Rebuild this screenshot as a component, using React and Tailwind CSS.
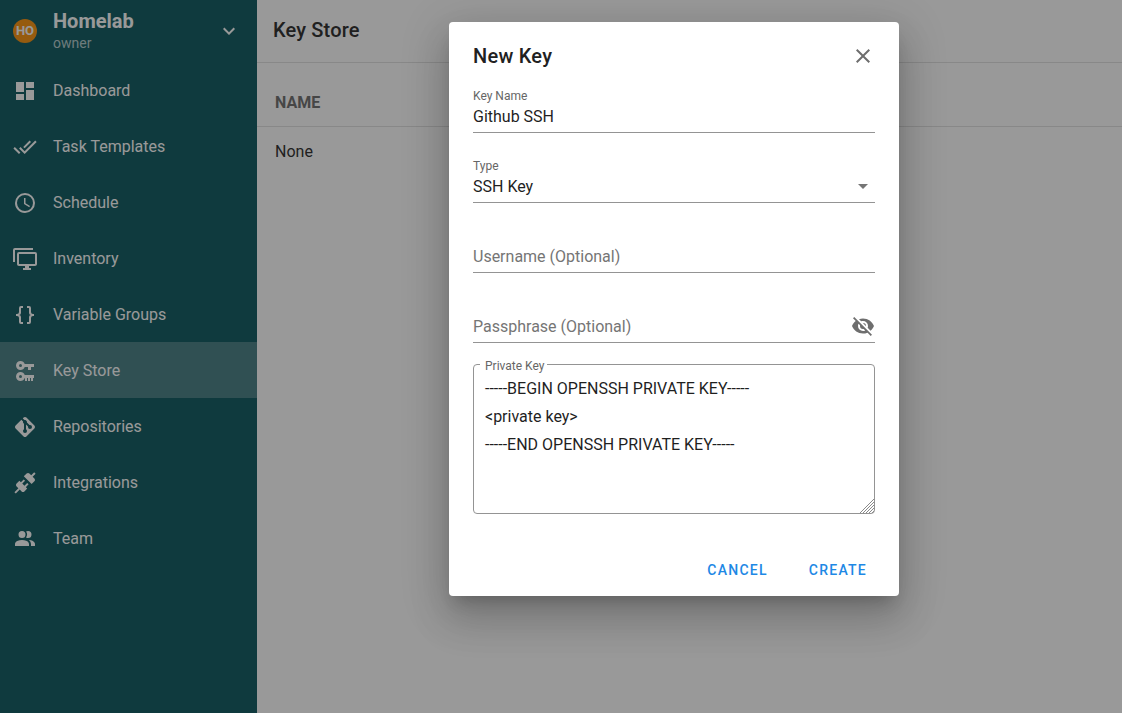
import React from "react";

const icons = {
  dashboard: "M13,3V9H21V3M13,21H21V11H13M3,21H11V15H3M3,13H11V3H3V13Z",
  checkAll: "M0.41,13.41L6,19L7.41,17.58L1.83,12M22.24,5.58L11.66,16.17L7.5,12L6.07,13.41L11.66,19L23.66,7M18,7L16.59,5.58L10.24,11.93L11.66,13.34L18,7Z",
  clock: "M12,20A8,8 0 0,0 20,12A8,8 0 0,0 12,4A8,8 0 0,0 4,12A8,8 0 0,0 12,20M12,2A10,10 0 0,1 22,12A10,10 0 0,1 12,22C6.47,22 2,17.5 2,12A10,10 0 0,1 12,2M12.5,7V12.25L17,14.92L16.25,16.15L11,13V7H12.5Z",
  monitor: "M22,17V7H6V17H22M22,5A2,2 0 0,1 24,7V17C24,18.11 23.1,19 22,19H16V21H18V23H10V21H12V19H6C4.89,19 4,18.1 4,17V7A2,2 0 0,1 6,5H22M2,3V15H0V3A2,2 0 0,1 2,1H20V3H2Z",
  braces: "M8,3A2,2 0 0,0 6,5V9A2,2 0 0,1 4,11H3V13H4A2,2 0 0,1 6,15V19A2,2 0 0,0 8,21H10V19H8V14A2,2 0 0,0 6,12A2,2 0 0,0 8,10V5H10V3M16,3A2,2 0 0,1 18,5V9A2,2 0 0,0 20,11H21V13H20A2,2 0 0,0 18,15V19A2,2 0 0,1 16,21H14V19H16V14A2,2 0 0,1 18,12A2,2 0 0,1 16,10V5H14V3H16Z",
  keys: "M7.5,2C9.46,2 11.13,3.25 11.74,5H21V8H18V11H15V8H11.74C11.13,9.75 9.46,11 7.5,11C5,11 3,9 3,6.5C3,4 5,2 7.5,2M7.5,5A1.5,1.5 0 0,0 6,6.5A1.5,1.5 0 0,0 7.5,8A1.5,1.5 0 0,0 9,6.5A1.5,1.5 0 0,0 7.5,5M7.5,13C9.46,13 11.13,14.25 11.74,16H21V19H20V22H18V19H17V22H15V19H14V22H12V19H11.74C11.13,20.75 9.46,22 7.5,22C5,22 3,20 3,17.5C3,15 5,13 7.5,13M7.5,16A1.5,1.5 0 0,0 6,17.5A1.5,1.5 0 0,0 7.5,19A1.5,1.5 0 0,0 9,17.5A1.5,1.5 0 0,0 7.5,16Z",
  git: "M2.6,10.59L8.38,4.8L10.07,6.5C9.83,7.35 10.22,8.28 11,8.73V14.27C10.4,14.61 10,15.26 10,16A2,2 0 0,0 12,18A2,2 0 0,0 14,16C14,15.26 13.6,14.61 13,14.27V9.41L15.07,11.5C15,11.65 15,11.82 15,12A2,2 0 0,0 17,14A2,2 0 0,0 19,12A2,2 0 0,0 17,10C16.82,10 16.65,10 16.5,10.07L13.93,7.5C14.19,6.57 13.71,5.55 12.78,5.16C12.35,5 11.9,4.96 11.5,5.07L9.8,3.38L10.59,2.6C11.37,1.81 12.63,1.81 13.41,2.6L21.4,10.59C22.19,11.37 22.19,12.63 21.4,13.41L13.41,21.4C12.63,22.19 11.37,22.19 10.59,21.4L2.6,13.41C1.81,12.63 1.81,11.37 2.6,10.59Z",
  connection: "M21.4 7.5C22.2 8.3 22.2 9.6 21.4 10.3L18.6 13.1L10.8 5.3L13.6 2.5C14.4 1.7 15.7 1.7 16.4 2.5L18.2 4.3L21.2 1.3L22.6 2.7L19.6 5.7L21.4 7.5M15.6 13.3L14.2 11.9L11.4 14.7L9.3 12.6L12.1 9.8L10.7 8.4L7.9 11.2L6.4 9.8L3.6 12.6C2.8 13.4 2.8 14.7 3.6 15.4L5.4 17.2L1.4 21.2L2.8 22.6L6.8 18.6L8.6 20.4C9.4 21.2 10.7 21.2 11.4 20.4L14.2 17.6L12.8 16.2L15.6 13.3Z",
  team: "M16 17V19H2V17S2 13 9 13 16 17 16 17M12.5 7.5A3.5 3.5 0 1 0 9 11A3.5 3.5 0 0 0 12.5 7.5M15.94 13A5.32 5.32 0 0 1 18 17V19H22V17S22 13.37 15.94 13M15 4A3.39 3.39 0 0 0 13.07 4.59A5 5 0 0 1 13.07 10.41A3.39 3.39 0 0 0 15 11A3.5 3.5 0 0 0 15 4Z",
  eyeOff: "M11.83,9L15,12.16C15,12.11 15,12.05 15,12A3,3 0 0,0 12,9C11.94,9 11.89,9 11.83,9M7.53,9.8L9.08,11.35C9.03,11.56 9,11.77 9,12A3,3 0 0,0 12,15C12.22,15 12.44,14.97 12.65,14.92L14.2,16.47C13.53,16.8 12.79,17 12,17A5,5 0 0,1 7,12C7,11.21 7.2,10.47 7.53,9.8M2,4.27L4.28,6.55L4.73,7C3.08,8.3 1.78,10 1,12C2.73,16.39 7,19.5 12,19.5C13.55,19.5 15.03,19.2 16.38,18.66L16.81,19.08L19.73,22L21,20.73L3.27,3M12,7A5,5 0 0,1 17,12C17,12.64 16.87,13.26 16.64,13.82L19.57,16.75C21.07,15.5 22.27,13.86 23,12C21.27,7.61 17,4.5 12,4.5C10.6,4.5 9.26,4.75 8,5.2L10.17,7.35C10.74,7.13 11.35,7 12,7Z",
  close: "M19,6.41L17.59,5L12,10.59L6.41,5L5,6.41L10.59,12L5,17.59L6.41,19L12,13.41L17.59,19L19,17.59L13.41,12L19,6.41Z",
  chevronDown: "M7.41,8.58L12,13.17L16.59,8.58L18,10L12,16L6,10L7.41,8.58Z",
  menuDown: "M7,10L12,15L17,10H7Z",
};

const Icon = ({ d, className }) => (
  <svg viewBox="0 0 24 24" fill="currentColor" className={className}>
    <path d={d} />
  </svg>
);

const menu = [
  { label: "Dashboard", icon: icons.dashboard },
  { label: "Task Templates", icon: icons.checkAll },
  { label: "Schedule", icon: icons.clock },
  { label: "Inventory", icon: icons.monitor },
  { label: "Variable Groups", icon: icons.braces },
  { label: "Key Store", icon: icons.keys, active: true },
  { label: "Repositories", icon: icons.git },
  { label: "Integrations", icon: icons.connection },
  { label: "Team", icon: icons.team },
];

const Field = ({ label, value, placeholder, icon, trailing, first }) => (
  <div className={"flex flex-col justify-end " + (first ? "h-[43px]" : "h-[70px]")}>
    <div className="h-9 flex items-end border-b border-[#949494] relative">
      {label && <span className="absolute left-0 top-[-8px] text-xs leading-[14px] text-[#666666]">{label}</span>}
      <span className={"flex-1 text-base leading-6 pb-[3px] " + (value ? "text-[#1f1f1f]" : "text-[#757575]")}>{value || placeholder}</span>
      {icon && <Icon d={icon} className={"w-6 h-6 mb-1 " + trailing} />}
    </div>
  </div>
);

export default function App() {
  return (
    <div className="h-[713px] flex bg-white overflow-hidden relative font-['Roboto',sans-serif]">
      <aside className="w-[257px] shrink-0 bg-[#005057] text-white">
        <div className="h-[62px] flex items-center pl-[13px] pr-4">
          <div className="w-6 h-6 rounded-full bg-[#f98c00] flex items-center justify-center text-[13px] font-bold mr-4">HO</div>
          <div className="flex-1 mt-[-1px]">
            <div className="text-xl leading-6 font-bold">Homelab</div>
            <div className="text-sm leading-[19px] pt-[1px] text-[#ffffffb3]">owner</div>
          </div>
          <Icon d={icons.chevronDown} className="w-6 h-6" />
        </div>
        {menu.map((item) => (
          <div key={item.label} className={"h-14 flex items-center pl-[13px] pt-[2px] " + (item.active ? "bg-white/24" : "")}>
            <Icon d={item.icon} className="w-6 h-6 mr-4" />
            <span className="text-base">{item.label}</span>
          </div>
        ))}
      </aside>

      <main className="flex-1 text-[#212121]">
        <div className="h-[63px] flex items-center pl-4 pb-[2px] border-b border-[#e0e0e0]">
          <h1 className="text-xl font-medium tracking-[0.15px]">Key Store</h1>
        </div>
        <div className="h-[64px] flex items-end pb-[11px] pl-[18px] border-b border-[#e0e0e0]">
          <span className="text-base font-bold text-[#666666] leading-6">NAME</span>
        </div>
        <div className="pl-[18px] pt-[13px] text-base leading-6">None</div>
      </main>

      {/* overlay + dialog */}
      <div className="absolute inset-0 bg-[#212121]/46 flex items-start pt-[22px] pl-[449px]">
        <div className="w-[450px] h-[574px] bg-white rounded text-[#212121] shadow-[0_11px_15px_-7px_rgba(0,0,0,0.2),0_24px_38px_3px_rgba(0,0,0,0.14),0_9px_46px_8px_rgba(0,0,0,0.12)] flex flex-col">
          <div className="h-[68px] shrink-0 flex items-center justify-between px-6">
            <h2 className="text-xl font-medium tracking-[0.25px]">New Key</h2>
            <Icon d={icons.close} className="w-6 h-6 text-[#6e6e6e]" />
          </div>
          <div className="px-6 shrink-0">
            <Field first label="Key Name" value="Github SSH" />
            <Field label="Type" value="SSH Key" icon={icons.menuDown} trailing="text-[#757575]" />
            <Field placeholder="Username (Optional)" />
            <Field placeholder="Passphrase (Optional)" icon={icons.eyeOff} trailing="text-[#6e6e6e]" />
            <fieldset className="mt-[14px] h-[157px] border border-[#949494] rounded px-[6px] relative">
              <legend className="text-xs leading-[14px] text-[#666666] pl-[5px] pr-[3px]">
                <span className="relative top-[2px]">Private Key</span>
              </legend>
              <textarea
                readOnly
                defaultValue={"-----BEGIN OPENSSH PRIVATE KEY-----\n<private key>\n-----END OPENSSH PRIVATE KEY-----"}
                className="absolute left-0 right-0 top-[-6px] h-[149px] w-full pl-[11px] pt-[10px] text-base leading-7 text-[#1f1f1f] outline-none resize-none bg-transparent"
              />
              {/* resize grip */}
              <svg viewBox="0 0 15 15" className="absolute right-0 bottom-0 w-[15px] h-[15px] text-[#8a8a8a]" stroke="currentColor" strokeWidth="1" fill="none">
                <path d="M1 15L15 1M4 15L15 4M7 15L15 7M10 15L15 10M13 15L15 13" />
              </svg>
            </fieldset>
          </div>
          <div className="flex-1 flex items-end justify-end pb-2 pr-4 gap-[9px]">
            <button className="h-9 px-4 text-sm font-medium tracking-[1.25px] text-[#1e88e5]">CANCEL</button>
            <button className="h-9 px-4 text-sm font-medium tracking-[1.25px] text-[#1e88e5]">CREATE</button>
          </div>
        </div>
      </div>
    </div>
  );
}
